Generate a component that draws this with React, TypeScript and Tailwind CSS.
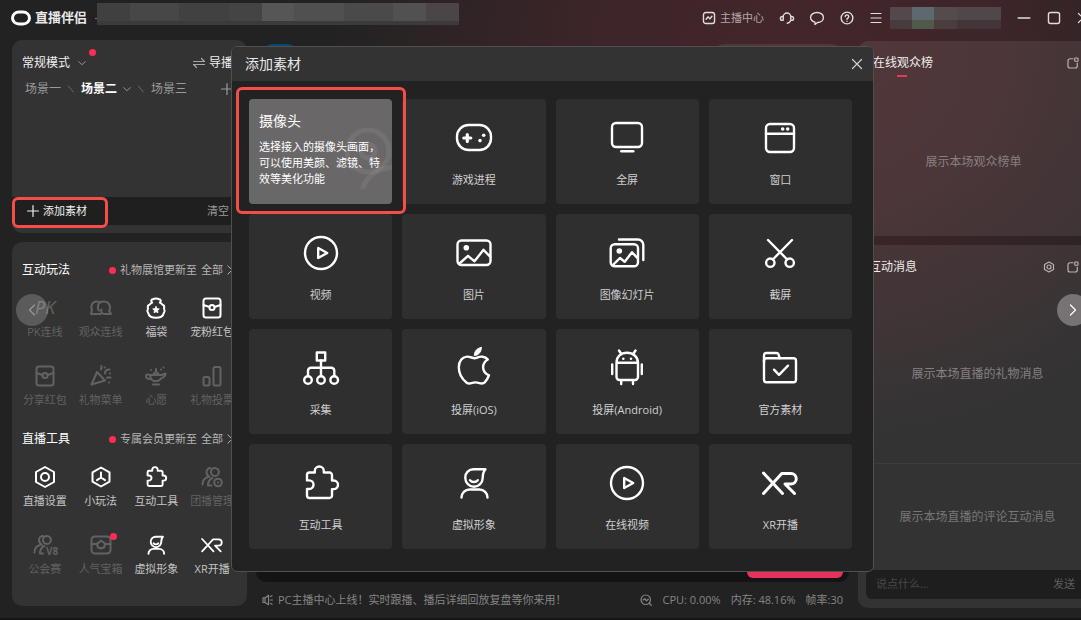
import React from 'react';

interface IconProps {
  name: string;
  className?: string;
  strokeWidth?: number;
}

// Drawn on a 40 x 40 grid
const largeIcons: Record<string, React.ReactNode> = {
  gamepad: (
    <>
      <rect x="3" y="7" width="34" height="25" rx="11.5" />
      <path d="M13.3 16.5v7M9.8 20h7" strokeWidth="3.2" />
      <circle cx="26" cy="22.6" r="1.8" fill="currentColor" stroke="none" />
      <circle cx="29.7" cy="17.2" r="1.8" fill="currentColor" stroke="none" />
    </>
  ),
  screen: (
    <>
      <rect x="5" y="5" width="30" height="24" rx="4" />
      <path d="M14.3 33.3h12" />
    </>
  ),
  window: (
    <>
      <rect x="6" y="6" width="28" height="28" rx="4" />
      <path d="M6 15.7h28" />
      <circle cx="22.7" cy="11" r="1.8" fill="currentColor" stroke="none" />
      <circle cx="27.7" cy="11" r="1.8" fill="currentColor" stroke="none" />
    </>
  ),
  play: (
    <>
      <circle cx="20" cy="20" r="16" />
      <path d="M17.2 15v10l9-5z" />
    </>
  ),
  image: (
    <>
      <rect x="3.5" y="7.5" width="33" height="24.5" rx="4" />
      <circle cx="12.3" cy="14.7" r="2.8" fill="currentColor" stroke="none" />
      <path d="M5.5 30.5l8.5-7.7 6.5 5.500 9-11.5 6.8 7" />
    </>
  ),
  slides: (
    <>
      <rect x="3.7" y="11.3" width="27.3" height="22" rx="4" />
      <circle cx="12.3" cy="18" r="2.8" fill="currentColor" stroke="none" />
      <path d="M5.5 32.3L13 25l4.7 3.7 7.3-9.4 5.8 6M12 6.5h19a5.3 5.3 0 0 1 5.3 5.3V27" />
    </>
  ),
  scissors: (
    <>
      <path d="M8 7l19.2 19.5M32 7L12.8 26.5" />
      <circle cx="10.3" cy="29.7" r="4.2" />
      <circle cx="29.7" cy="29.7" r="4.2" />
    </>
  ),
  tree: (
    <>
      <rect x="15.8" y="4.5" width="8.4" height="8" />
      <path d="M20 12.5V28M7 28v-5.3a3 3 0 0 1 3-3h20.3a3 3 0 0 1 3 3V28" />
      <circle cx="7" cy="32" r="3.8" />
      <circle cx="20" cy="32" r="3.8" />
      <circle cx="33.2" cy="32" r="3.8" />
    </>
  ),
  apple: (
    <>
      <path d="M20.5 10.2c2.2 0 4-2 8-1.5 2.5.3 4.3 1.5 5.3 2.8-3 1.8-4.7 4.3-4.7 7.8 0 3.8 2.2 6.5 5.9 8-1 2.6-2.4 4.9-4 6.8-3 3.2-5.3.3-9.5.3s-6 2.6-8.8.3C8.5 31.5 4.8 26 4.8 19.3 4.8 12.8 8.7 8.8 13 8.6c3.3-.1 5.2 1.6 7.5 1.6z" />
      <path d="M27.3-.5c.2 4.5-3 8-7 8 0-4.5 3-7.4 7-8z" fill="currentColor" strokeWidth="1" />
    </>
  ),
  android: (
    <>
      <path d="M9.5 14.8C9.5 8.6 14 4.8 20 4.8s11 3.800 11 10V29a3 3 0 0 1-3 3H12.5a3 3 0 0 1-3-3zM9.5 14.8H31M12 2.5l2 3M28.5 2.5l-2 3M14.2 32v4M26 32v4M5.2 16.5v9.500M34.8 16.5v9.500" />
      <circle cx="16.3" cy="10.7" r="1.3" fill="currentColor" stroke="none" />
      <circle cx="24" cy="10.7" r="1.3" fill="currentColor" stroke="none" />
    </>
  ),
  folder: (
    <>
      <rect x="4" y="10.3" width="32" height="24" rx="2.5" />
      <path d="M4 14V7.5A2.5 2.5 0 0 1 6.5 5H16a3 3 0 0 1 2.9 2.4l.7 2.9M14 21.7l5 5.100 9-9.100" />
    </>
  ),
  puzzle: (
    <path d="M6 12a2.5 2.5 0 0 1 2.5-2.5h5.300V8a4.5 4.5 0 0 1 9 0v1.5h5.700A2.5 2.5 0 0 1 31 12v5.500h1.700a4.3 4.3 0 0 1 0 8.600H31v6.400a2.5 2.5 0 0 1-2.5 2.5h-20A2.5 2.5 0 0 1 6 32.5V26h2.200a4.3 4.3 0 0 0 0-8.600H6z" />
  ),
  avatar: (
    <path d="M31.5 6.3H19.3a8 8 0 0 0-8 8v.7a8.7 8.7 0 0 0 17.4 0c0-4 .3-6 2.8-8.7zM16 17.2c2 2.4 5.800 2.4 7.800 0M7.5 34.5a8 8 0 0 1 8-8h10a8 8 0 0 1 8 8" />
  ),
  xr: <path d="M3.5 10l19 20.5M3.5 30.5l18.3-20H31a5.2 5.2 0 0 1 0 10.5h-6l9.5 9.500" strokeWidth="3" />,
};

// Drawn on a 24 x 24 grid
const smallIcons: Record<string, React.ReactNode> = {
  bubbles: (
    <path d="M8 5.5a5.5 5.5 0 0 0-5 8.300L2 18h9.500M10 14.5c-2-2.500-1.500-9 4.500-9a6 6 0 0 1 6.500 6c0 1.500-.4 2.300-.9 3.200L22 18h-6.500c-3 0-4-2.500-3-4.500M8 5.5c1.500 0 2.500.4 3.500 1" />
  ),
  bag: (
    <>
      <path d="M8.2 6.500C6.500 5 7 3.500 9 3.300 10 2.200 14 2.200 15 3.300c2 .2 2.500 1.700.8 3.200 1.200.6 2 1.200 2.700 2.200 1.800.6 2.200 2 1.400 3.300.8 1.500.8 3.500-.1 5-.6 3-3.300 4.700-7.800 4.700S4.800 20 4.200 17c-.9-1.500-.9-3.500-.1-5-.8-1.300-.4-2.700 1.400-3.300.7-1 1.500-1.600 2.700-2.200z" />
      <path d="M12 10.500l1 2.100 2.300.3-1.700 1.600.4 2.300-2-1.100-2 1.100.4-2.300-1.700-1.600 2.300-.3z" fill="currentColor" strokeWidth=".8" />
    </>
  ),
  packet: (
    <>
      <rect x="3.5" y="2.5" width="17" height="19" rx="2.5" />
      <path d="M3.5 9l6 2M20.5 9l-6 2" />
      <circle cx="12" cy="11.5" r="2.6" />
    </>
  ),
  party: (
    <path d="M8 8L2.5 20.500 16 16.500zM12 5.5c.8-1.500.5-2.500.3-3.500M16 9.500c0-2.500 1-4 4.500-4M18 14c1.300-1 2.500-.8 3.500-.3M15.5 3.500h.1M21 9.500h.1M20 18.500h.1" />
  ),
  lamp: (
    <path d="M6 11h11.500l4-1.500c0 3.500-2.500 4-4.500 5-1.500 2-3.500 2.800-5.500 2.800-3 0-5-2-5.500-6.300zM6 15c-3 0-4-1.300-4-3s2-2 4-1M9 20.500h6M9.500 11c0-1.500 1-2.500 2.500-2.500s2.500 1 2.500 2.500M12 8.500V5M17 5.500h.1M19.500 3.500h.1M7 6h.1" />
  ),
  vote: (
    <>
      <rect x="3.5" y="13" width="6" height="8.5" rx="1.5" />
      <rect x="13.5" y="3" width="7" height="18.5" rx="1.5" />
    </>
  ),
  settings: (
    <>
      <path d="M12 2l9 5v10l-9 5-9-5V7z" />
      <circle cx="12" cy="12" r="4" />
    </>
  ),
  hexStar: <path d="M12 2.5l8.500 4.800v9.400L12 21.5l-8.500-4.800V7.300zM12 7.500v5l-4 2.700M12 12.500l4 2.700" />,
  group: (
    <>
      <path d="M9.5 12C8 11 6.5 9.500 6.5 7a4 4 0 0 1 4-4M8 12c-3.500 1-5.500 4-5.500 7.500M15 3a4 4 0 1 1-.1 8 4 4 0 0 1 .1-8zM12.5 13c-2.500 1-4.500 3.500-4.500 7.500h3.500" />
      <circle cx="18" cy="17.5" r="3.8" />
      <path d="M18 17.500h.1" />
    </>
  ),
  guild: (
    <>
      <path d="M9 12C7.500 11 6 9.500 6 7a4 4 0 0 1 4-4M7 12c-3.500 1-5.500 4-5.500 7.500M14 3a4 4 0 1 1-.1 8 4 4 0 0 1 .1-8zM11.500 13c-2.500 1-4.500 3.500-4.500 7.500h3" />
      <text x="13" y="21.500" fontSize="10" fontWeight="700" fill="currentColor" stroke="none">V8</text>
    </>
  ),
  pk: (
    <text x="2" y="18" fontSize="18" fontStyle="italic" fill="currentColor" stroke="none">PK</text>
  ),
  chest: (
    <>
      <rect x="2.5" y="3.5" width="19" height="17" rx="3.5" />
      <path d="M2.5 11H8M16 11h5.500M12 7.500l1.800 1.300 2.200 1.700-.8 3.700-3.200 1.300-3.200-1.300-.8-3.700 2-1z" />
    </>
  ),
  stats: (
    <>
      <rect x="2.5" y="2.5" width="19" height="19" rx="4" />
      <path d="M7 14l3.500-4 3 3.500L17 9" />
    </>
  ),
  headset: (
    <path d="M5.500 16V10a6.500 6.500 0 0 1 13 0v6M5.500 9.500H4a3 3 0 0 0 0 6.500h1.500zM18.500 9.500H20a3 3 0 0 1 0 6.500h-1.500zM18.500 16c-1 3-3 4.500-6 5" />
  ),
  chat: <path d="M12 2.500c6 0 11 3.500 11 8.500s-4.500 8.500-10 8.700L8.500 23v-4C4 17.500 1 14.500 1 11c0-5 5-8.500 11-8.500z" />,
  help: (
    <>
      <circle cx="12" cy="12" r="10" />
      <path d="M9 9.500a3 3 0 1 1 4.500 2.700c-1 .6-1.500 1-1.500 2M12 17.500v.2" />
    </>
  ),
  menu: <path d="M2 3h20M2 12h20M2 21h20" />,
  minimize: <path d="M2 12h20" />,
  maximize: <rect x="2.5" y="2.5" width="19" height="19" rx="3.5" />,
  close: <path d="M3 3l18 18M21 3L3 21" />,
  popout: (
    <>
      <path d="M12 3.500H6a4 4 0 0 0-4 4V18a4 4 0 0 0 4 4h10.500a4 4 0 0 0 4-4v-6" />
      <rect x="15.5" y="2" width="6.5" height="6.5" rx="1" />
    </>
  ),
  down: <path d="M2 8l10 9 10-9" />,
  right: <path d="M7 2l10 10L7 22" />,
  left: <path d="M17 2L7 12l10 10" />,
  plus: <path d="M12 1v22M1 12h22" />,
  swap: <path d="M1 9h22l-6-6M23 15H1l6 6" />,
  slash: <path d="M4 3l15 18" />,
  speaker: <path d="M2 7.500h4V17H2zM6 8l7-5.500v19L6 17M17 5l3-1.500M17 12h4M17 19l3 1.500" />,
  monitor: (
    <>
      <circle cx="11.500" cy="11.500" r="9.500" />
      <path d="M6 12l3.500-2.500 3.500 4 3.500-3M18.500 18.500l4 4" />
    </>
  ),
};

const Icon: React.FC<IconProps> = ({ name, className = 'size-3.5', strokeWidth = 2.4 }) => {
  const large = name in largeIcons;
  return (
    <svg
      className={`shrink-0 overflow-visible ${className}`}
      viewBox={large ? '0 0 40 40' : '0 0 24 24'}
      fill="none"
      stroke="currentColor"
      strokeWidth={strokeWidth}
      strokeLinecap="round"
      strokeLinejoin="round"
      aria-hidden="true"
    >
      {large ? largeIcons[name] : smallIcons[name]}
    </svg>
  );
};

const sources = [
  { icon: 'gamepad', label: '游戏进程' },
  { icon: 'screen', label: '全屏' },
  { icon: 'window', label: '窗口' },
  { icon: 'play', label: '视频' },
  { icon: 'image', label: '图片' },
  { icon: 'slides', label: '图像幻灯片' },
  { icon: 'scissors', label: '截屏' },
  { icon: 'tree', label: '采集' },
  { icon: 'apple', label: '投屏(iOS)' },
  { icon: 'android', label: '投屏(Android)' },
  { icon: 'folder', label: '官方素材' },
  { icon: 'puzzle', label: '互动工具' },
  { icon: 'avatar', label: '虚拟形象' },
  { icon: 'play', label: '在线视频' },
  { icon: 'xr', label: 'XR开播' },
];

interface Tool {
  icon: string;
  label: string;
  disabled?: boolean;
  dot?: boolean;
}

const playTools: Tool[] = [
  { icon: 'pk', label: 'PK连线', disabled: true },
  { icon: 'bubbles', label: '观众连线', disabled: true },
  { icon: 'bag', label: '福袋' },
  { icon: 'packet', label: '宠粉红包' },
  { icon: 'packet', label: '分享红包', disabled: true },
  { icon: 'party', label: '礼物菜单', disabled: true },
  { icon: 'lamp', label: '心愿', disabled: true },
  { icon: 'vote', label: '礼物投票', disabled: true },
];

const liveTools: Tool[] = [
  { icon: 'settings', label: '直播设置' },
  { icon: 'hexStar', label: '小玩法' },
  { icon: 'puzzle', label: '互动工具' },
  { icon: 'group', label: '团播管理', disabled: true },
  { icon: 'guild', label: '公会赛', disabled: true },
  { icon: 'chest', label: '人气宝箱', disabled: true, dot: true },
  { icon: 'avatar', label: '虚拟形象' },
  { icon: 'xr', label: 'XR开播' },
];

const ToolSection: React.FC<{ title: string; notice: string; tools: Tool[] }> = ({ title, notice, tools }) => (
  <section>
    <div className="flex h-5 items-center pr-3 pl-2.5 whitespace-nowrap">
      <h2 className="text-xs text-white">{title}</h2>
      <span className="ml-auto size-[7px] rounded-full bg-[#fe2c55]" />
      <span className="ml-1 text-[11px] text-[#b5b5b5]">{notice}</span>
      <button className="ml-1 flex items-center gap-0.5 text-[11px] text-[#b5b5b5]">
        全部
        <Icon name="right" className="size-2.5" />
      </button>
    </div>
    <div className="mt-4 grid grid-cols-4 gap-y-6 pr-[7px] pl-[5px]">
      {tools.map((tool) => (
        <button
          key={tool.label}
          disabled={tool.disabled}
          className={`flex flex-col items-center gap-1 ${tool.disabled ? 'text-[#626262]' : 'text-white'}`}
        >
          <span className="relative">
            <Icon name={tool.icon} className="size-6" strokeWidth={tool.icon in largeIcons ? 3.2 : 2} />
            {tool.dot && <span className="absolute top-0 -right-1 size-[7px] rounded-full bg-[#fe2c55]" />}
          </span>
          <span className={`text-[11px] leading-4 whitespace-nowrap ${tool.disabled ? '' : 'text-[#c4c4c4]'}`}>
            {tool.label}
          </span>
        </button>
      ))}
    </div>
  </section>
);

const TitleBar: React.FC = () => (
  <header className="flex h-9 items-center pl-[11px]">
    <svg className="h-4 w-5 shrink-0" viewBox="0 0 20 16" aria-hidden="true">
      <rect x="1.5" y="2" width="17" height="12" rx="6.5" fill="none" stroke="#fff" strokeWidth="3" />
    </svg>
    <h1 className="ml-1 text-[13px] font-semibold whitespace-nowrap text-[#e8e8e8]">直播伴侣</h1>
    <span className="ml-2 h-px w-0.5 bg-[#777]" />
    <div className="mb-2 flex h-[22px] w-[362px] border-b-4 border-[#3c3a3a]">
      <span className="grow-2 bg-[#404040]" />
      <span className="grow-3 bg-[#474747]" />
      <span className="grow-3 bg-[#414141]" />
      <span className="grow-2 bg-[#444]" />
      <span className="grow-2 bg-[#565656]" />
      <span className="grow-3 bg-[#505050]" />
      <span className="grow-3 bg-[#4b4a4a]" />
      <span className="grow-2 bg-[#525151]" />
      <span className="grow-2 bg-[#4a4546]" />
    </div>
    <div className="-mr-2 ml-auto flex items-center gap-4 text-[#e2dddd]">
      <button className="flex items-center gap-1 text-[11px] whitespace-nowrap text-[#b3a8a9]">
        <Icon name="stats" className="size-3.5 text-[#e2dddd]" />
        主播中心
      </button>
      <button aria-label="客服"><Icon name="headset" /></button>
      <button aria-label="消息"><Icon name="chat" /></button>
      <button aria-label="帮助"><Icon name="help" /></button>
      <div className="flex items-center gap-2">
        <button aria-label="菜单"><Icon name="menu" className="size-3" /></button>
        <div className="grid h-[22px] w-[111px] grid-cols-5">
          <span className="bg-linear-to-b from-[#53484c] from-60% to-[#463b3f] to-60%" />
          <span className="bg-linear-to-b from-[#5d696c] from-60% to-[#4f5a4a] to-60%" />
          <span className="bg-linear-to-b from-[#554a4c] from-60% to-[#4b3c3d] to-60%" />
          <span className="bg-linear-to-b from-[#50474a] from-60% to-[#43343a] to-60%" />
          <span className="bg-linear-to-b from-[#4f474a] from-60% to-[#433438] to-60%" />
        </div>
      </div>
      <button aria-label="最小化"><Icon name="minimize" className="size-3.5" /></button>
      <button aria-label="最大化"><Icon name="maximize" className="size-3.5" /></button>
      <button aria-label="关闭"><Icon name="close" className="size-3" /></button>
    </div>
  </header>
);

const ScenePanel: React.FC = () => (
  <section className="flex h-[193px] flex-col overflow-hidden rounded-[10px] bg-white/8">
    <div className="mt-[13px] flex h-5 items-center pl-2.5 text-xs whitespace-nowrap text-[#f0f0f0]">
      <button className="relative flex items-center gap-2">
        常规模式
        <Icon name="down" className="size-2 text-[#aaa]" />
        <span className="absolute -top-1.5 -right-2.5 size-[7px] rounded-full bg-[#fe2c55]" />
      </button>
      <button className="ml-auto flex items-center gap-1 pr-3.5">
        <Icon name="swap" className="size-3 text-[#aaa]" />
        导播
      </button>
    </div>
    <div className="mt-1.5 flex h-5 items-center gap-1.5 pl-[13px] text-xs whitespace-nowrap text-[#9a9a9a]">
      <button>场景一</button>
      <Icon name="slash" className="size-2 text-[#777]" />
      <button className="flex items-center gap-1.5 font-bold text-white">
        场景二
        <Icon name="down" className="size-2 text-[#aaa]" />
      </button>
      <Icon name="slash" className="size-2 text-[#777]" />
      <button>场景三</button>
      <button aria-label="添加场景" className="mr-3.5 ml-auto"><Icon name="plus" className="size-3" /></button>
    </div>
    <div className="mt-auto mb-2 flex h-7 items-center justify-between bg-[#1f1f1f] pr-[18px] pl-[15px] text-[11px] whitespace-nowrap">
      <button className="flex items-center gap-1 text-[#f0f0f0]">
        <Icon name="plus" className="size-3" />
        添加素材
      </button>
      <button className="text-[#9a9a9a]">清空</button>
    </div>
  </section>
);

const AudiencePanels: React.FC = () => (
  <aside className="-mr-2 flex w-[231px] shrink-0 flex-col gap-[9px] pt-px pb-2.5 text-[#858080]">
    <section className="flex h-[195px] flex-col rounded-l-[10px] bg-white/8 pt-3 text-xs">
      <div className="flex h-5 items-center justify-between pr-2.5 pl-[13px] text-[#b8b0b1]">
        <h2 className="relative pl-0.5 text-[#f0eded]">
          在线观众榜
          <span className="absolute inset-x-0 -bottom-1.5 mx-auto h-0.5 w-2.5 bg-[#e63958]" />
        </h2>
        <button aria-label="弹出观众榜"><Icon name="popout" className="size-3" /></button>
      </div>
      <p className="flex grow items-center justify-center pt-3.5">展示本场观众榜单</p>
    </section>
    <section className="flex grow flex-col rounded-l-[10px] bg-white/8 pt-3 pb-[9px] text-xs">
      <div className="flex h-5 items-center gap-3 pr-2.5 pl-[11px] text-[#b8b0b1]">
        <h2 className="mr-auto text-[#f0eded]">互动消息</h2>
        <button aria-label="消息设置"><Icon name="settings" className="size-3" /></button>
        <button aria-label="弹出消息"><Icon name="popout" className="size-3" /></button>
      </div>
      <p className="mt-2 flex grow-5 basis-0 items-center justify-center border-b border-white/5 pl-2">展示本场直播的礼物消息</p>
      <p className="flex grow-3 basis-0 items-center justify-center pl-2 text-[#777]">展示本场直播的评论互动消息</p>
      <form className="ml-2 flex h-[29px] items-center rounded-l-md bg-[#1e1e1e] pr-3.5 pl-2.5 text-[11px]">
        <input
          type="text"
          aria-label="评论"
          placeholder="说点什么..."
          className="min-w-0 grow bg-transparent outline-none placeholder:text-[#494949]"
        />
        <button type="button" className="text-[#5e5e5e]">发送</button>
      </form>
    </section>
  </aside>
);

const AddSourceDialog: React.FC = () => (
  <div
    role="dialog"
    aria-labelledby="add-source-title"
    className="absolute top-[46px] right-[207px] left-[231px] overflow-hidden rounded-md border border-[#505050] bg-[#222]"
  >
    <div className="flex h-[34px] items-center justify-between bg-[#333] pr-2.5 pl-[13px]">
      <h2 id="add-source-title" className="text-sm text-[#e8e8e8]">添加素材</h2>
      <button aria-label="关闭窗口" className="text-[#d0d0d0]"><Icon name="close" className="size-3" strokeWidth={2.4} /></button>
    </div>
    <div className="grid grid-cols-4 gap-2.5 pt-[18px] pr-[21px] pb-[22px] pl-[17px]">
      <button className="relative flex h-[105px] flex-col overflow-hidden rounded bg-[#696767] px-2.5 pt-3 text-left text-white">
        <svg className="absolute top-7 right-0 h-[66px] w-12" viewBox="0 0 48 66" fill="none" stroke="#fff" strokeOpacity=".07" strokeWidth="5" strokeLinecap="round" aria-hidden="true">
          <circle cx="24" cy="24" r="21" />
          <circle cx="24" cy="24" r="7" />
          <path d="M48 40C34 42 24 48 19 60" />
        </svg>
        <span className="relative block text-sm leading-5">摄像头</span>
        <span className="relative mt-2 block text-[11px] leading-4">选择接入的摄像头画面，可以使用美颜、滤镜、特效等美化功能</span>
      </button>
      {sources.map((source) => (
        <button key={source.label} className="flex h-[105px] flex-col items-center rounded bg-[#2f2f2f] pt-[19px] text-white">
          <Icon name={source.icon} className="size-10" />
          <span className="mt-3.5 text-[11px] leading-4 text-[#d0d0d0]">{source.label}</span>
        </button>
      ))}
    </div>
  </div>
);

const App: React.FC = () => {
  return (
    <div className="relative flex min-h-screen flex-col overflow-hidden border-b-2 border-[#191417] bg-[#222] bg-[radial-gradient(ellipse_480px_400px_at_800px_50px,#42262a,#3e2529_40%,#222_100%)] font-['Open_Sans','Noto_Sans_CJK_SC',sans-serif]">
      <TitleBar />
      <main className="flex grow gap-[9px] pt-1 pl-3">
        <aside className="flex w-[235px] shrink-0 flex-col gap-[9px] pb-3">
          <ScenePanel />
          <div className="flex grow flex-col gap-[21px] rounded-[10px] bg-white/8 pt-[18px] pb-7">
            <ToolSection title="互动玩法" notice="礼物展馆更新至" tools={playTools} />
            <ToolSection title="直播工具" notice="专属会员更新至" tools={liveTools} />
          </div>
        </aside>

        <div className="flex min-w-0 grow flex-col">
          <div className="flex h-8 justify-between px-1 pt-1">
            <span className="w-10 rounded-full bg-[#064a70]" />
            <span className="w-[134px] rounded-full bg-white/8" />
          </div>
          <div className="flex grow items-end justify-end rounded-[10px] bg-[#141414] px-1.5 pb-1">
            <button aria-label="开始直播" className="h-8 w-24 rounded-md bg-[#e9325a]" />
          </div>
          <footer className="flex h-9 shrink-0 items-center gap-2.5 px-1.5 text-[11px] whitespace-nowrap text-[#858585]">
            <p className="mr-auto flex items-center gap-1">
              <Icon name="speaker" className="size-3" />
              PC主播中心上线！实时跟播、播后详细回放复盘等你来用！
            </p>
            <Icon name="monitor" className="size-3" />
            <span>CPU: 0.00%</span>
            <span>内存: 48.16%</span>
            <span>帧率:30</span>
          </footer>
        </div>

        <AudiencePanels />
      </main>

      <button aria-label="上一张" className="absolute top-[294px] left-4 flex size-8 items-center justify-center rounded-full bg-white/20 text-[#999]">
        <Icon name="left" className="size-3" />
      </button>
      <button aria-label="下一张" className="absolute top-[294px] -right-2 flex size-8 items-center justify-center rounded-full bg-[#777273] text-white">
        <Icon name="right" className="size-3" />
      </button>

      <AddSourceDialog />

      {/* Highlight frames for the two steps */}
      <div className="pointer-events-none absolute top-[87px] left-[236px] h-[127px] w-[170px] rounded-md border-3 border-[#f54d47]" />
      <div className="pointer-events-none absolute top-[197px] left-3 h-[31px] w-24 rounded-md border-3 border-[#f54d47]" />
    </div>
  );
};

export default App;
